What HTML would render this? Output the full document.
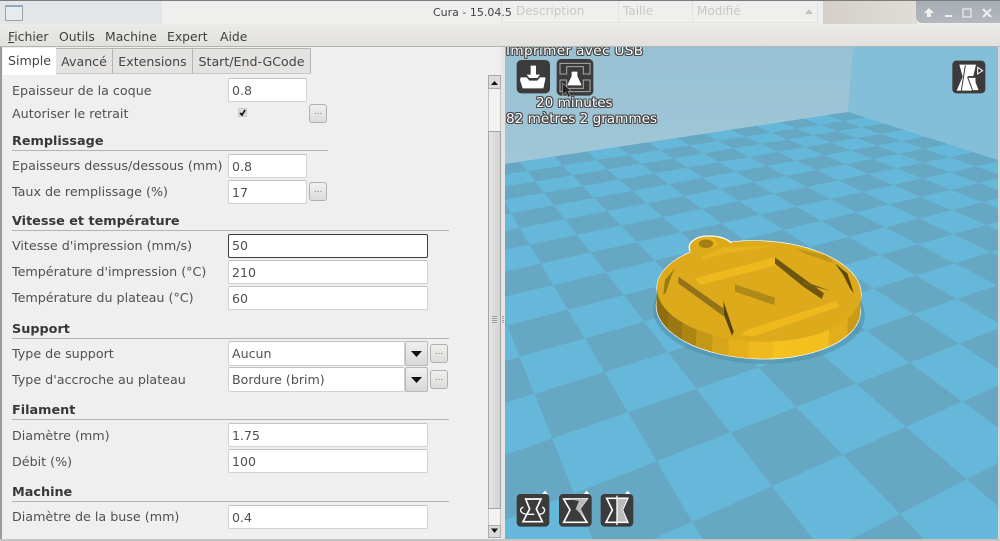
<!DOCTYPE html>
<html lang="fr"><head><meta charset="utf-8"><title>Cura - 15.04.5</title>
<style>
html,body{margin:0;padding:0;width:1000px;height:541px;overflow:hidden}
body{overflow:hidden;position:relative;background:#efefef;font-family:"DejaVu Sans","Liberation Sans",sans-serif;color:#444}
div,span{position:absolute;box-sizing:border-box;white-space:nowrap}
svg{position:absolute;left:0;top:0;overflow:hidden}
.l{left:12px;font-size:12.7px;line-height:16px;color:#505050}
.h{left:12px;font-size:12.8px;line-height:16px;font-weight:bold;color:#383838;margin-top:1px}
.r{left:12px;height:1px;background:#b4b4b2}
.i{left:228px;height:24px;background:#fff;border:1px solid #d2d2d0;border-top-color:#c2c2c0;border-radius:2px;font-size:12.6px;line-height:24px;padding-left:3px;color:#505050}
.b{width:18px;height:19px;background:linear-gradient(#f0f0ee,#dcdcda);border:1px solid #b0b0ae;border-radius:3px;font-size:9px;line-height:15px;text-align:center;color:#777}
.t{top:48px;height:26px;background:#e4e3e1;border:1px solid #b5b5b3;border-left:0;border-bottom-color:#c8c8c6;font-size:12.6px;line-height:25px;text-align:center;color:#444}
.m{top:29px;font-size:12.4px;line-height:16px;color:#404040}
.o{color:#fff;font-size:13.6px;line-height:16px;text-shadow:-1px 0 #444,1px 0 #444,0 -1px #444,0 1px #444,-1px -1px #555,1px 1px #555,1px -1px #555,-1px 1px #555}
.g{top:3px;font-size:12px;line-height:16px;color:#c8c8c6}
</style></head><body>

<!-- 3D viewport -->
<div style="left:505px;top:47px;width:495px;height:494px;background:#84bfd8"></div>
<svg width="1000" height="541" viewBox="0 0 1000 541">
<defs><linearGradient id="w" x1="0" y1="0" x2="0" y2="1"><stop offset="0" stop-color="#98c1d4"/><stop offset="1" stop-color="#a0c7d7"/></linearGradient></defs>
<polygon points="505,47 853,47 848,112 505,164" fill="url(#w)"/>
<polygon points="853,47 1000,47 1000,163 848,112" fill="#83bfd8"/>
</svg>
<div style="left:0;top:0;width:1000px;height:541px;overflow:hidden;clip-path:polygon(505px 47px,1000px 47px,1000px 541px,505px 541px)">
<div style="left:0;top:0;width:680px;height:720px;transform-origin:0 0;background:conic-gradient(#66b8da 25%,#66a8c4 0 50%,#66b8da 0 75%,#66a8c4 0);background-size:80px 80px;transform:matrix3d(3.07118,-0.097725,0,0.00152875,-1.02095,0.125975,0,-0.0028365,0,0,1,0,736.353,439.52,0,2.29153)"></div>
</div>

<!-- Model -->
<svg width="1000" height="541" viewBox="0 0 1000 541">
<defs>
<linearGradient id="side" gradientUnits="userSpaceOnUse" x1="50" y1="0" x2="662" y2="0">
<stop offset="0" stop-color="#8f6e10"/><stop offset=".06" stop-color="#8f6e10"/>
<stop offset=".06" stop-color="#9c7812"/><stop offset=".13" stop-color="#9c7812"/>
<stop offset=".13" stop-color="#ad8513"/><stop offset=".2" stop-color="#ad8513"/>
<stop offset=".2" stop-color="#c49716"/><stop offset=".28" stop-color="#c49716"/>
<stop offset=".28" stop-color="#d6a519"/><stop offset=".36" stop-color="#d6a519"/>
<stop offset=".36" stop-color="#e6b01b"/><stop offset=".46" stop-color="#e6b01b"/>
<stop offset=".46" stop-color="#f0ba1e"/><stop offset=".58" stop-color="#f0ba1e"/>
<stop offset=".58" stop-color="#f6c21f"/><stop offset=".85" stop-color="#f3be1e"/>
<stop offset=".85" stop-color="#e2ae1b"/><stop offset=".94" stop-color="#e2ae1b"/>
<stop offset=".94" stop-color="#c99b17"/><stop offset="1" stop-color="#c99b17"/>
</linearGradient>
</defs>
<g transform="translate(640 225) scale(.33333)">
<ellipse cx="358" cy="262" rx="318" ry="154" fill="#4f8fa9" opacity=".6" transform="rotate(2 356 225)"/>
<g transform="rotate(2 356 225)">
<ellipse cx="356" cy="199" rx="306" ry="151" fill="#fff" stroke="#fff" stroke-width="4"/>
<ellipse cx="356" cy="250" rx="306" ry="151" fill="#fff" stroke="#fff" stroke-width="4"/>
<path d="M50 199H662V250A306 151 0 0 1 50 250Z" fill="url(#side)"/>
<ellipse cx="356" cy="199" rx="306" ry="151" fill="#dcaa1b"/>
</g>
<path d="M150 78C140 55 165 33 205 33C240 33 262 42 274 54L250 85L170 95Z" fill="#dcaa1b"/>
<path d="M150 78C140 55 165 33 205 33C240 33 262 42 274 54" fill="none" stroke="#fff" stroke-width="4"/>
<ellipse cx="202" cy="54" rx="29" ry="17" fill="#e6b41c"/>
<ellipse cx="198" cy="56" rx="22" ry="13" fill="#a67f14"/>
<path d="M185 92L250 68L400 62L250 87L190 104Z" fill="#e8b41d"/>
<path d="M465 70L560 92L585 115L500 88Z" fill="#c0951a"/>
<path d="M165 160L405 97L420 118L180 180Z" fill="#efb91e"/>
<path d="M320 315L590 228L597 245L340 335L300 330Z" fill="#efb91e"/>
<path d="M115 155L250 250L252 275L115 175Z" fill="#93731a"/>
<path d="M250 228L281 320L276 332L252 270Z" fill="#574306"/>
<path d="M405 97L552 205L545 222L490 185L405 116Z" fill="#6e5610"/>
<path d="M490 168L570 197L490 178Z" fill="#7a6012"/>
<path d="M285 178L405 218L403 240L285 200Z" fill="#b08a17"/>
<path d="M585 115L622 145L642 205L630 190L610 150Z" fill="#5f490a"/>
<path d="M70 208L75 165L105 130L95 150L77 205Z" fill="#9a7a14"/>
</g>
</svg>

<!-- Viewport buttons -->
<svg width="1000" height="541" viewBox="0 0 1000 541">
<g transform="translate(500 0) scale(.33333)">
<rect x="50" y="180" width="100" height="100" rx="14" fill="#3b3b3b"/>
<path d="M92 197H108V224H120L112 234H88L80 224H92Z" fill="#fff"/>
<path d="M62 232H80L88 242H112L120 232H136V238L130 265H68L60 240Z" fill="#fff"/>
<rect x="170" y="177" width="110" height="110" rx="14" fill="#3b3b3b"/>
<path d="M180 190H270V222H250V200H200V222H180ZM180 240H200V265H250V240H270V275H180Z" fill="none" stroke="#aaa" stroke-width="3"/>
<path d="M215 215H232V228L245 256H202L215 228Z" fill="#fff"/>
<path d="M188 250V285L197 277L205 291L211 288L204 274H214Z" fill="#222" stroke="#999" stroke-width="2"/>
</g>
<g transform="translate(800 0) scale(.33333)">
<rect x="457" y="182" width="99" height="98" rx="12" fill="#3b3b3b"/>
<path d="M478 194H528L520 228H505V240L512 240L536 272H470L488 230Z" fill="#fff"/>
<path d="M503 232H528V246L538 272H518Z" fill="#fff" stroke="#3b3b3b" stroke-width="3"/>
<path d="M496 196L484 272" stroke="#3b3b3b" stroke-width="3"/>
<path d="M533 202L548 212L533 222Z" fill="none" stroke="#fff" stroke-width="3"/>
</g>
<g transform="translate(505 485) scale(.33333)">
<rect x="35" y="27" width="98" height="98" rx="12" fill="#3b3b3b"/>
<path d="M112 27L120 17L128 27Z" fill="#fff"/>
<path d="M62 42H108L94 72L112 110H54L74 72Z" fill="none" stroke="#fff" stroke-width="5"/>
<path d="M55 66C40 72 45 88 72 88H88M112 66C125 74 118 88 100 88" fill="none" stroke="#fff" stroke-width="4"/>
<rect x="162" y="27" width="98" height="98" rx="12" fill="#3b3b3b"/>
<path d="M237 27L245 17L253 27Z" fill="#fff"/>
<path d="M176 42H246L222 75L246 112H176L195 75Z" fill="none" stroke="#fff" stroke-width="5"/>
<path d="M190 42H246L228 72L242 100L212 72L222 48Z" fill="#bbb"/>
<rect x="287" y="27" width="98" height="98" rx="12" fill="#3b3b3b"/>
<path d="M360 27L368 17L376 27Z" fill="#fff"/>
<path d="M305 40H368L352 75L368 112H303L322 75Z" fill="none" stroke="#fff" stroke-width="5"/>
<path d="M336 42H366L352 75L366 110H336Z" fill="#bbb"/>
<path d="M336 32V120" stroke="#fff" stroke-width="4"/>
</g>
</svg>

<div class="o" style="left:506px;top:43px;letter-spacing:.37px">Imprimer avec USB</div>
<div class="o" style="left:536px;top:95px">20 minutes</div>
<div class="o" style="left:506px;top:111px">82 mètres 2 grammes</div>

<!-- Left panel -->
<div style="left:0;top:47px;width:501px;height:494px;background:#efefef"></div>
<div style="left:501px;top:47px;width:4px;height:494px;background:#e6e5e3"></div>
<div style="left:0;top:47px;width:2px;height:494px;background:#9a9a9a"></div>
<div style="left:502px;top:316px;width:2px;height:8px;background:repeating-linear-gradient(#999 0 1px,#eee 1px 2px)"></div>

<!-- Title bar -->
<div style="left:0;top:0;width:1000px;height:24px;background:#eeeeec"></div>
<div style="left:162px;top:0;width:656px;height:24px;background:#efefed"></div>
<div style="left:0;top:0;width:162px;height:24px;background:#e3e6e9"></div>
<div style="left:823px;top:0;width:94px;height:24px;background:linear-gradient(90deg,#d4cfc9,#e0dcd6)"></div>
<div style="left:5px;top:5px;width:18px;height:16px;background:#e8ebee;border:1px solid #9da3a8;border-top:2px solid #8aa9c4;border-radius:1px"></div>
<div style="left:501px;top:0;width:118px;height:23px;border:1px solid #e2e2e0;border-top:0"></div>
<div style="left:619px;top:0;width:74px;height:23px;border:1px solid #e2e2e0;border-top:0;border-left:0"></div>
<div style="left:693px;top:0;width:125px;height:23px;border:1px solid #e2e2e0;border-top:0;border-left:0"></div>
<span class="g" style="left:516px">Description</span>
<span class="g" style="left:623px">Taille</span>
<span class="g" style="left:697px">Modifié</span>
<svg width="1000" height="541" viewBox="0 0 1000 541"><path d="M805 14L809 9L813 14Z" fill="#c4c4c2"/></svg>
<span style="left:433px;top:5px;font-size:11px;line-height:16px;color:#444">Cura - 15.04.5</span>
<div style="left:916px;top:0;width:84px;height:23px;background:linear-gradient(#a6adb3,#b2b8bd);border-bottom-left-radius:6px"></div>
<svg width="1000" height="541" viewBox="0 0 1000 541">
<path d="M924 13L929 8L934 13H931V17H927V13Z" fill="#f2f2f2"/>
<rect x="945" y="15" width="7" height="2" fill="#eee"/>
<rect x="963" y="9" width="8" height="8" fill="none" stroke="#e4e6e8" stroke-width="1.4"/>
<path d="M983 9L991 17M991 9L983 17" stroke="#f0f0f0" stroke-width="2"/>
</svg>
<div style="left:0;top:0;width:1000px;height:1px;background:#7c7c7c"></div>

<!-- Menu bar -->
<div style="left:0;top:24px;width:1000px;height:23px;background:linear-gradient(#ecebe8,#e2e1de);border-bottom:1px solid #b4b4b2"></div>
<span class="m" style="left:8px"><u style="text-underline-offset:1px">F</u>ichier</span>
<span class="m" style="left:59px">Outils</span>
<span class="m" style="left:105px">Machine</span>
<span class="m" style="left:167px">Expert</span>
<span class="m" style="left:220px">Aide</span>

<!-- Tabs -->
<div class="t" style="left:56px;width:57px">Avancé</div>
<div class="t" style="left:113px;width:80px">Extensions</div>
<div class="t" style="left:193px;width:118px">Start/End-GCode</div>
<div style="left:3px;top:48px;width:53px;height:27px;background:#fff;font-size:12.6px;line-height:25px;text-align:center;color:#444">Simple</div>

<!-- Form -->
<div class="l" style="top:83px">Epaisseur de la coque</div>
<div class="i" style="top:78px;width:79px">0.8</div>
<div class="l" style="top:106px">Autoriser le retrait</div>
<div style="left:238px;top:108px;width:9px;height:9px;background:#dcdcda;border:1px solid #ccc"></div>
<svg width="1000" height="541" viewBox="0 0 1000 541"><path d="M240 113L242 115L245 110" fill="none" stroke="#111" stroke-width="1.7"/></svg>
<div class="b" style="left:309px;top:104px">...</div>

<div class="h" style="top:133px">Remplissage</div>
<div class="r" style="top:150px;width:316px"></div>
<div class="l" style="top:158px">Epaisseurs dessus/dessous (mm)</div>
<div class="i" style="top:154px;width:79px">0.8</div>
<div class="l" style="top:184px">Taux de remplissage (%)</div>
<div class="i" style="top:180px;width:79px">17</div>
<div class="b" style="left:309px;top:182px">...</div>

<div class="h" style="top:213px">Vitesse et température</div>
<div class="r" style="top:230px;width:437px"></div>
<div class="l" style="top:238px">Vitesse d'impression (mm/s)</div>
<div class="i" style="top:234px;width:200px;border:1.5px solid #3c3c3c;line-height:22px">50</div>
<div class="l" style="top:264px">Température d'impression (°C)</div>
<div class="i" style="top:260px;width:200px">210</div>
<div class="l" style="top:290px">Température du plateau (°C)</div>
<div class="i" style="top:286px;width:200px">60</div>

<div class="h" style="top:321px">Support</div>
<div class="r" style="top:338px;width:437px"></div>
<div class="l" style="top:346px">Type de support</div>
<div class="i" style="top:341px;width:177px;height:25px">Aucun</div>
<div style="left:405px;top:341px;width:23px;height:25px;background:linear-gradient(#f0f0ee,#dad9d7);border:1px solid #b8b8b6;border-radius:2px"></div>
<svg width="1000" height="541" viewBox="0 0 1000 541"><path d="M411 351H422L416.500 357Z" fill="#111"/></svg>
<div class="b" style="left:430px;top:344px">...</div>
<div class="l" style="top:372px">Type d'accroche au plateau</div>
<div class="i" style="top:367px;width:177px;height:25px">Bordure (brim)</div>
<div style="left:405px;top:367px;width:23px;height:25px;background:linear-gradient(#f0f0ee,#dad9d7);border:1px solid #b8b8b6;border-radius:2px"></div>
<svg width="1000" height="541" viewBox="0 0 1000 541"><path d="M411 377H422L416.500 383Z" fill="#111"/></svg>
<div class="b" style="left:430px;top:370px">...</div>

<div class="h" style="top:402px">Filament</div>
<div class="r" style="top:419px;width:437px"></div>
<div class="l" style="top:428px">Diamètre (mm)</div>
<div class="i" style="top:423px;width:200px">1.75</div>
<div class="l" style="top:454px">Débit (%)</div>
<div class="i" style="top:449px;width:200px">100</div>

<div class="h" style="top:484px">Machine</div>
<div class="r" style="top:501px;width:437px"></div>
<div class="l" style="top:509px">Diamètre de la buse (mm)</div>
<div class="i" style="top:505px;width:200px">0.4</div>

<!-- Scrollbar -->
<div style="left:488px;top:75px;width:13px;height:462px;background:#f2f2f0;border:1px solid #c4c4c2"></div>
<div style="left:488px;top:75px;width:13px;height:14px;background:#dcdbd9;border:1px solid #aaa"></div>
<svg width="1000" height="541" viewBox="0 0 1000 541"><path d="M491 85H498L494.500 81Z" fill="#111"/></svg>
<div style="left:488px;top:131px;width:13px;height:378px;background:linear-gradient(90deg,#e6e5e3,#d4d3d1);border:1px solid #a4a4a2"></div>
<div style="left:492px;top:316px;width:5px;height:8px;background:repeating-linear-gradient(#999 0 1px,#e4e4e2 1px 2px)"></div>
<div style="left:488px;top:525px;width:13px;height:13px;background:#dcdbd9;border:1px solid #aaa"></div>
<svg width="1000" height="541" viewBox="0 0 1000 541"><path d="M491 528.500H498L494.500 533Z" fill="#111"/></svg>

<!-- Window edges -->
<div style="left:998px;top:47px;width:2px;height:494px;background:#d8d8d6"></div>
<div style="left:0;top:539px;width:1000px;height:2px;background:#c4c4c2"></div>
</body></html>
